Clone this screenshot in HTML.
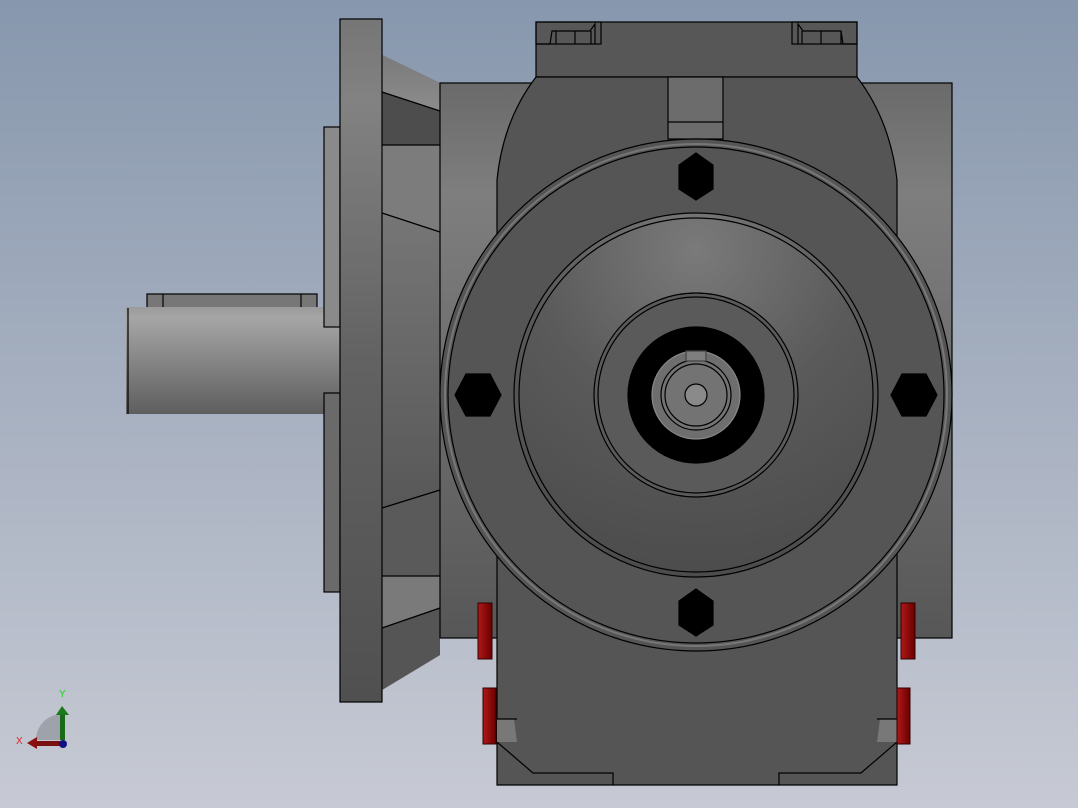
<!DOCTYPE html>
<html><head><meta charset="utf-8"><style>html,body{margin:0;padding:0;width:1078px;height:808px;overflow:hidden}svg{display:block}</style></head><body>
<svg width="1078" height="808" viewBox="0 0 1078 808" xmlns="http://www.w3.org/2000/svg">
<defs>
<linearGradient id="bg" x1="0" y1="0" x2="0" y2="1"><stop offset="0" stop-color="#8797ad"/><stop offset="1" stop-color="#c7cad4"/></linearGradient>
<linearGradient id="vg" x1="0" y1="0" x2="0" y2="1"><stop offset="0" stop-color="#6a6a6a"/><stop offset="0.2" stop-color="#7e7e7e"/><stop offset="1" stop-color="#575757"/></linearGradient>
<linearGradient id="sh" x1="0" y1="0" x2="0" y2="1"><stop offset="0" stop-color="#9a9a9a"/><stop offset="0.1" stop-color="#a6a6a6"/><stop offset="1" stop-color="#5e5e5e"/></linearGradient>
<linearGradient id="fl" x1="0" y1="0" x2="0" y2="1"><stop offset="0" stop-color="#767676"/><stop offset="0.12" stop-color="#828282"/><stop offset="0.5" stop-color="#626262"/><stop offset="1" stop-color="#505050"/></linearGradient>
<linearGradient id="tw" x1="0" y1="0" x2="0" y2="1"><stop offset="0" stop-color="#7a7a7a"/><stop offset="1" stop-color="#8c8c8c"/></linearGradient>
<linearGradient id="tm" x1="0" y1="0" x2="0" y2="1"><stop offset="0" stop-color="#767676"/><stop offset="1" stop-color="#585858"/></linearGradient>
<radialGradient id="dk" cx="0.5" cy="0.1" r="0.9"><stop offset="0" stop-color="#7a7a7a"/><stop offset="0.5" stop-color="#5a5a5a"/><stop offset="1" stop-color="#4c4c4c"/></radialGradient>
<linearGradient id="rd" x1="0" y1="0" x2="1" y2="0"><stop offset="0" stop-color="#b01818"/><stop offset="1" stop-color="#6a0000"/></linearGradient>
</defs>
<rect width="1078" height="808" fill="url(#bg)"/>
<g stroke="#000" stroke-width="1.2">
<!-- shaft -->
<rect x="147" y="294" width="170" height="16" fill="#777"/>
<line x1="163" y1="294" x2="163" y2="310"/><line x1="301" y1="294" x2="301" y2="310"/>
<rect x="126" y="307" width="214" height="107" fill="url(#sh)" stroke="none"/>
<line x1="128" y1="308" x2="128" y2="414"/>
<!-- small side plates -->
<rect x="324" y="127" width="16" height="200" fill="#8a8a8a"/>
<rect x="324" y="393" width="16" height="199" fill="#6a6a6a"/>
<!-- taper -->
<polygon points="382,55 440,83 440,655 382,690" fill="#5a5a5a" stroke="none"/>
<polygon points="382,55 440,83 440,111 382,92" fill="url(#tw)" stroke="none"/>
<polygon points="382,92 440,111 440,145 382,145" fill="#4d4d4d" stroke="none"/>
<polygon points="382,145 440,145 440,232 382,213" fill="#7c7c7c" stroke="none"/>
<polygon points="382,213 440,232 440,490 382,508" fill="url(#tm)" stroke="none"/>
<polygon points="382,576 440,576 440,608 382,628" fill="#7a7a7a" stroke="none"/>
<polygon points="382,628 440,608 440,655 382,690" fill="#555" stroke="none"/>
<line x1="382" y1="92" x2="440" y2="111"/><line x1="382" y1="145" x2="440" y2="145"/><line x1="382" y1="213" x2="440" y2="232"/>
<line x1="382" y1="508" x2="440" y2="490"/><line x1="382" y1="576" x2="440" y2="576"/><line x1="382" y1="628" x2="440" y2="608"/>
<!-- flange -->
<rect x="340" y="19" width="42" height="683" fill="url(#fl)"/>
<!-- right housing box -->
<rect x="440" y="83" width="512" height="555" fill="url(#vg)"/>
<!-- top cap -->
<rect x="536" y="22" width="321" height="55" fill="#575757"/>
<path d="M536,44 H550 L552,31 H590 L595,24 V44" fill="none"/>
<rect x="536" y="22" width="65" height="22" fill="none"/>
<line x1="556" y1="31" x2="556" y2="44"/><line x1="575" y1="31" x2="575" y2="44"/><line x1="591" y1="31" x2="591" y2="44"/>
<rect x="792" y="22" width="65" height="22" fill="none"/>
<path d="M857,44 H843 L841,31 H803 L798,24 V44" fill="none"/>
<line x1="802" y1="31" x2="802" y2="44"/><line x1="821" y1="31" x2="821" y2="44"/><line x1="841" y1="31" x2="841" y2="44"/>
<!-- body -->
<path d="M536,77 H857 Q890,120 897,180 V785 H497 V180 Q503,120 536,77 Z" fill="#555"/>
<rect x="668" y="77" width="55" height="62" fill="#6c6c6c"/>
<line x1="668" y1="122" x2="723" y2="122"/>
<!-- bottom feet -->
<path d="M497,742 L533,773 H613 V785 M897,742 L861,773 H779 V785" fill="none"/>
<polygon points="497,719 514,719 517,742 497,742" fill="#787878" stroke="none"/>
<polygon points="897,719 880,719 877,742 897,742" fill="#787878" stroke="none"/>
<line x1="497" y1="719" x2="517" y2="719"/><line x1="877" y1="719" x2="897" y2="719"/>
<!-- big circle -->
<circle cx="696" cy="395" r="256" fill="#555"/>
<circle cx="696" cy="395" r="251" fill="none" stroke="#777" stroke-width="2"/>
<circle cx="696" cy="395" r="248" fill="none"/>
<circle cx="696" cy="395" r="182" fill="url(#dk)"/>
<circle cx="696" cy="395" r="177" fill="none"/>
<circle cx="696" cy="395" r="102" fill="#5a5a5a"/>
<circle cx="696" cy="395" r="98" fill="none"/>
<circle cx="696" cy="395" r="68" fill="#000"/>
<circle cx="696" cy="395" r="44" fill="#6e6e6e" stroke="#888"/>
<circle cx="696" cy="395" r="35" fill="#737373"/>
<circle cx="696" cy="395" r="31" fill="none"/>
<rect x="686" y="351" width="20" height="10" fill="#7e7e7e" stroke="#444"/>
<circle cx="696" cy="395" r="11" fill="#8a8a8a"/>
<!-- hex bolts -->
<g fill="#000">
<polygon points="696,153 713,165 713,189 696,200 679,189 679,165"/>
<polygon points="696,589 713,601 713,625 696,636 679,625 679,601"/>
<polygon points="455,395 466,374 490,374 501,395 490,416 466,416"/>
<polygon points="891,395 902,374 926,374 937,395 926,416 902,416"/>
</g>
</g>
<!-- red bolts -->
<rect x="478" y="603" width="14" height="56" fill="url(#rd)" stroke="#300"/>
<rect x="483" y="688" width="13" height="56" fill="url(#rd)" stroke="#300"/>
<rect x="901" y="603" width="14" height="56" fill="url(#rd)" stroke="#300"/>
<rect x="897" y="688" width="13" height="56" fill="url(#rd)" stroke="#300"/>
<!-- axis triad -->
<path d="M36,740 A26,26 0 0 1 62,714 V740 Z" fill="#9ea2aa"/>
<rect x="60" y="713" width="5" height="27" fill="#1a6a1a"/>
<polygon points="56,715 62,706 69,715" fill="#1a7a1a"/>
<rect x="36" y="741" width="25" height="5" fill="#7a1010"/>
<polygon points="37,737 27,743 37,749" fill="#8a1010"/>
<circle cx="63" cy="744" r="4" fill="#101080"/>
<text x="59" y="697" font-family="Liberation Sans, sans-serif" font-size="10" fill="#20d020">Y</text>
<text x="16" y="744" font-family="Liberation Sans, sans-serif" font-size="10" fill="#e02020">X</text>
</svg>
</body></html>
